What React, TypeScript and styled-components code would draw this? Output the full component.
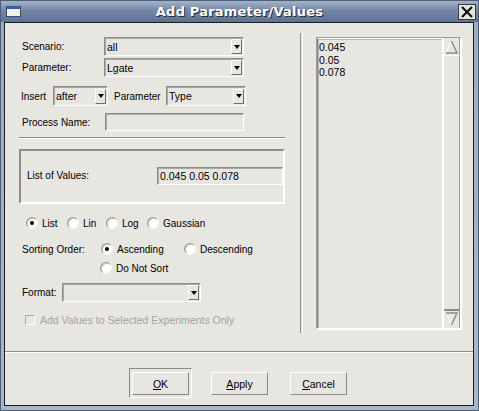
import styled, { createGlobalStyle } from "styled-components"

const GlobalStyle = createGlobalStyle`
  body {
    margin: 0;
    font-family: "Liberation Sans", Arial, sans-serif;
  }
`

const BG = "#e8e6e1"
const SHADE = "#8c8c88"

const Window = styled.div`
  width: 479px;
  height: 411px;
  box-sizing: border-box;
  display: flex;
  flex-direction: column;
  background: linear-gradient(to bottom, #9aabc3, #a9b7cb);
  border: 1px solid #4f5f77;
`

const TitleBar = styled.div`
  height: 21px;
  display: grid;
  grid-template-columns: 1fr auto 1fr;
  align-items: center;
  background: linear-gradient(to bottom, #a3b3ca 0%, #7487a5 45%, #5d7292 100%);
`

const TitleIcon = styled.div`
  justify-self: start;
  margin-left: 5px;
  width: 15px;
  height: 11px;
  box-sizing: border-box;
  border: 1px solid #3d4f6e;
  border-top: 3px solid #3f5b9c;
  background: #eef0ea;
`

const Title = styled.div`
  font-family: "DejaVu Sans", sans-serif;
  font-weight: bold;
  font-size: 13px;
  color: #fff;
  text-shadow: 1px 1px 0 #1e2838;
  letter-spacing: 0.2px;
`

const CloseButton = styled.div`
  justify-self: end;
  margin-right: 2px;
  width: 18px;
  height: 16px;
  box-sizing: border-box;
  border: 1px solid #3a3a3a;
  background: #e4e4e0;
  display: flex;
  align-items: center;
  justify-content: center;
`

const Client = styled.div`
  flex: 1;
  margin: 0 4px 4px 3px;
  border: 1px solid #1c1c1c;
  background: ${BG};
  display: flex;
  flex-direction: column;
  font-size: 10px;
  color: #000;
`

const Main = styled.div`
  height: 328px;
  display: flex;
  padding-left: 14px;
`

const LeftPanel = styled.div`
  width: 266px;
  padding-top: 14px;
  display: flex;
  flex-direction: column;
`

const Row = styled.div<{ $h?: number; $mt?: number; $pl?: number }>`
  display: flex;
  align-items: center;
  height: ${(p) => p.$h ?? 19}px;
  margin-top: ${(p) => p.$mt ?? 0}px;
  padding-left: ${(p) => p.$pl ?? 0}px;
`

const Label = styled.span<{ $w?: number; $ml?: number }>`
  display: inline-block;
  width: ${(p) => (p.$w ? `${p.$w}px` : "auto")};
  margin-left: ${(p) => p.$ml ?? 0}px;
  white-space: nowrap;
`

const Field = styled.div<{ $w: number; $h?: number }>`
  width: ${(p) => p.$w}px;
  height: ${(p) => p.$h ?? 19}px;
  box-sizing: border-box;
  border-top: 1px solid ${SHADE};
  border-left: 1px solid ${SHADE};
  border-bottom: 1px solid #fff;
  border-right: 1px solid #fff;
  box-shadow: inset 1px 1px 0 #a9a9a5;
  background: ${BG};
  display: flex;
  align-items: center;
  font-size: 10.5px;
  padding-left: 2px;
`

const FieldText = styled.span`
  flex: 1;
  white-space: nowrap;
`

const ArrowButton = styled.div`
  width: 11px;
  height: 15px;
  margin-right: 1px;
  box-sizing: border-box;
  border-top: 1px solid #fff;
  border-left: 1px solid #fff;
  border-bottom: 1px solid #6e6e6a;
  border-right: 1px solid #6e6e6a;
  display: flex;
  align-items: center;
  justify-content: center;

  &::after {
    content: "";
    border-left: 3.5px solid transparent;
    border-right: 3.5px solid transparent;
    border-top: 4px solid #000;
  }
`

const HSep = styled.div<{ $mt?: number }>`
  margin-top: ${(p) => p.$mt ?? 0}px;
  border-top: 1px solid ${SHADE};
  border-bottom: 1px solid #fff;
`

const GroupBox = styled.div`
  margin-top: 10px;
  height: 55px;
  box-sizing: border-box;
  border-top: 2px solid ${SHADE};
  border-left: 2px solid ${SHADE};
  border-bottom: 2px solid #fff;
  border-right: 2px solid #fff;
  display: flex;
  align-items: center;
  padding-left: 6px;
  padding-bottom: 2px;
`

const RadioOption = styled.label<{ $w?: number }>`
  display: inline-flex;
  align-items: center;
  width: ${(p) => (p.$w ? `${p.$w}px` : "auto")};
  white-space: nowrap;
`

const RadioDot = styled.span<{ $on?: boolean }>`
  width: 12px;
  height: 12px;
  box-sizing: border-box;
  border-radius: 50%;
  background: #fff;
  border: 1px solid;
  border-color: #9a9a96 #f4f4f2 #f4f4f2 #9a9a96;
  box-shadow: inset 1px 1px 0 #c8c8c4;
  margin-right: 4px;
  display: flex;
  align-items: center;
  justify-content: center;

  &::after {
    content: "";
    display: ${(p) => (p.$on ? "block" : "none")};
    width: 4px;
    height: 4px;
    border-radius: 50%;
    background: #000;
  }
`

const CheckBox = styled.span`
  width: 10px;
  height: 10px;
  box-sizing: border-box;
  border: 1px solid #a8a8a4;
  border-right-color: #fff;
  border-bottom-color: #fff;
  margin-right: 5px;
`

const Disabled = styled.span`
  color: #a3a3a0;
  font-size: 10.5px;
`

const VSep = styled.div`
  margin: 10px 0 0 15px;
  width: 1px;
  height: 300px;
  border-left: 1px solid ${SHADE};
  border-right: 1px solid #fff;
`

const ListBox = styled.div`
  margin: 14px 0 0 13px;
  width: 146px;
  height: 293px;
  box-sizing: border-box;
  border-top: 1px solid #9a9a96;
  border-left: 1px solid #9a9a96;
  border-bottom: 2px solid #fff;
  border-right: 2px solid #fff;
  display: flex;
`

const ListItems = styled.div`
  flex: 1;
  border-top: 1px solid #fff;
  border-left: 1px solid #8a8a86;
  box-shadow: inset 1px 1px 0 #b4b4b0;
  padding: 2px 0 0 1px;
  font-size: 10.5px;
  line-height: 12.5px;
`

const ScrollBar = styled.div`
  width: 18px;
  box-sizing: border-box;
  border-left: 2px solid #fff;
  display: flex;
  flex-direction: column;
`

const ScrollArrow = styled.div`
  height: 17px;
  border-right: 1px solid #9a9a96;
  display: flex;
  align-items: center;
  justify-content: center;
`

const ScrollTrack = styled.div`
  flex: 1;
  border-right: 1px solid #9a9a96;
  border-top: 1px solid #fff;
  border-bottom: 2px solid #8a8a86;
`

const BottomSep = styled.div`
  border-top: 1px solid ${SHADE};
  border-bottom: 1px solid #fff;
`

const ButtonBar = styled.div`
  flex: 1;
  display: flex;
  justify-content: center;
  align-items: flex-start;
  padding-top: 15px;
  padding-right: 2px;
`

const DefaultFrame = styled.div`
  padding: 3px 2px 2px 2px;
  border-top: 1px solid #8a8a86;
  border-left: 1px solid #8a8a86;
  border-bottom: 1px solid #fff;
  border-right: 1px solid #fff;
  margin-right: 19px;
`

const Button = styled.button<{ $ml?: number; $mt?: number }>`
  width: 57px;
  height: 23px;
  margin-left: ${(p) => p.$ml ?? 0}px;
  margin-top: ${(p) => p.$mt ?? 0}px;
  padding: 0;
  box-sizing: border-box;
  background: ${BG};
  border-top: 1px solid #fff;
  border-left: 1px solid #fff;
  border-bottom: 1px solid #8a8a86;
  border-right: 1px solid #8a8a86;
  font-family: "Liberation Sans", Arial, sans-serif;
  font-size: 10.5px;
  color: #000;

  u {
    text-decoration: underline;
    text-underline-offset: 1px;
  }
`

const Combo = ({ w, h, value }: { w: number; h?: number; value?: string }) => (
  <Field $w={w} $h={h}>
    <FieldText>{value}</FieldText>
    <ArrowButton />
  </Field>
)

const Radio = ({ w, on, children }: { w?: number; on?: boolean; children: string }) => (
  <RadioOption $w={w}>
    <RadioDot $on={on} />
    {children}
  </RadioOption>
)

const UpArrow = ({ flip }: { flip?: boolean }) => (
  <svg width="15" height="15" viewBox="0 0 15 15" style={{ transform: flip ? "scaleY(-1)" : undefined }}>
    <path d="M2 14 L7.5 2" stroke="#fff" strokeWidth="1.2" fill="none" strokeDasharray={flip ? "1.5 1" : undefined} />
    <path d="M7.5 2 L13 14 L2 14" stroke="#8a8a86" strokeWidth="1.4" fill="none" />
  </svg>
)

export default function App() {
  return (
    <>
      <GlobalStyle />
      <Window>
        <TitleBar>
          <TitleIcon />
          <Title>Add Parameter/Values</Title>
          <CloseButton>
            <svg width="14" height="12" viewBox="0 0 14 12">
              <path d="M2 1 L12 11 M12 1 L2 11" stroke="#111" strokeWidth="2.2" />
            </svg>
          </CloseButton>
        </TitleBar>
        <Client>
          <Main>
            <LeftPanel>
              <Row $pl={3}>
                <Label $w={82}>Scenario:</Label>
                <Combo w={140} value="all" />
              </Row>
              <Row $pl={3} $mt={2}>
                <Label $w={82}>Parameter:</Label>
                <Combo w={140} value="Lgate" />
              </Row>
              <Row $pl={2} $mt={9} $h={20}>
                <Label $w={32}>Insert</Label>
                <Combo w={55} h={20} value="after" />
                <Label $w={52} $ml={6}>Parameter</Label>
                <Combo w={80} h={20} value="Type" />
              </Row>
              <Row $pl={3} $mt={7} $h={18}>
                <Label $w={83}>Process Name:</Label>
                <Field $w={139} $h={18} />
              </Row>
              <HSep $mt={6} />
              <GroupBox>
                <Label $w={130}>List of Values:</Label>
                <Field $w={126} $h={18}>
                  <FieldText>0.045 0.05 0.078</FieldText>
                </Field>
              </GroupBox>
              <Row $pl={7} $mt={11} $h={16}>
                <Radio w={41} on>List</Radio>
                <Radio w={39}>Lin</Radio>
                <Radio w={41}>Log</Radio>
                <Radio>Gaussian</Radio>
              </Row>
              <Row $pl={3} $mt={10} $h={16}>
                <Label $w={79}>Sorting Order:</Label>
                <Radio w={83} on>Ascending</Radio>
                <Radio>Descending</Radio>
              </Row>
              <Row $pl={81} $mt={3} $h={16}>
                <Radio>Do Not Sort</Radio>
              </Row>
              <Row $pl={3} $mt={7} $h={19}>
                <Label $w={40}>Format:</Label>
                <Combo w={139} />
              </Row>
              <Row $pl={6} $mt={10} $h={16}>
                <CheckBox />
                <Disabled>Add Values to Selected Experiments Only</Disabled>
              </Row>
            </LeftPanel>
            <VSep />
            <ListBox>
              <ListItems>
                <div>0.045</div>
                <div>0.05</div>
                <div>0.078</div>
              </ListItems>
              <ScrollBar>
                <ScrollArrow>
                  <UpArrow />
                </ScrollArrow>
                <ScrollTrack />
                <ScrollArrow>
                  <UpArrow flip />
                </ScrollArrow>
              </ScrollBar>
            </ListBox>
          </Main>
          <BottomSep />
          <ButtonBar>
            <DefaultFrame>
              <Button>
                <u>O</u>K
              </Button>
            </DefaultFrame>
            <Button $mt={4}>
              <u>A</u>pply
            </Button>
            <Button $ml={22} $mt={4}>
              <u>C</u>ancel
            </Button>
          </ButtonBar>
        </Client>
      </Window>
    </>
  )
}
